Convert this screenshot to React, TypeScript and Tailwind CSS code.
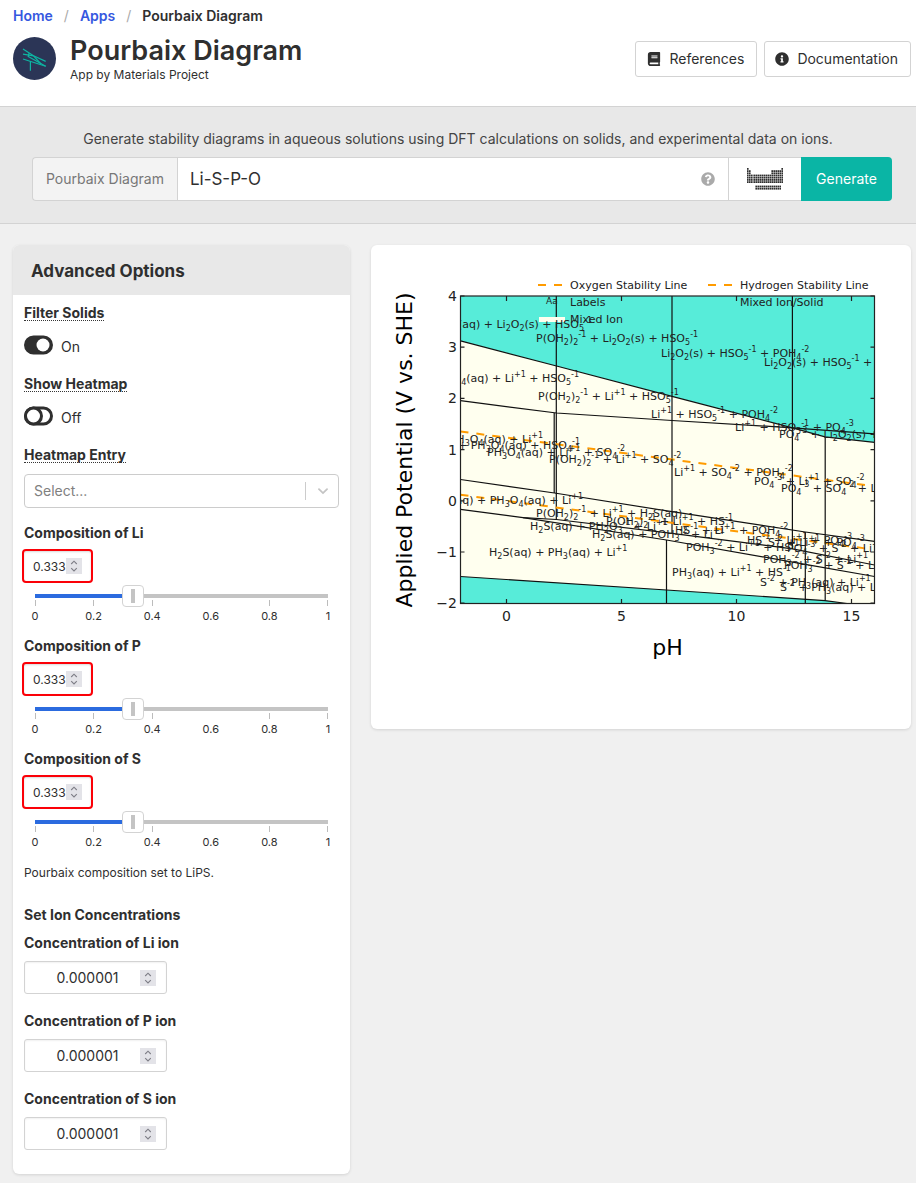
import React, { useState } from "react";
import { FaBook, FaInfoCircle, FaQuestionCircle } from "react-icons/fa";

/* ---------- small icons ---------- */

function LogoMark() {
  return (
    <svg viewBox="0 0 43 43" className="size-[43px] shrink-0" aria-hidden="true">
      <circle cx="21.5" cy="21.5" r="21.5" fill="#2b3556" />
      <g fill="none" stroke="#0eb5a2" strokeWidth="1.2">
        <path d="M10 12 L20.5 18.8 L32.7 24.4" />
        <path d="M10 17.2 L20.5 18.8" />
        <path d="M16.2 16 L15.2 19.5 L32.7 29.2" />
        <path d="M10 22 L32.7 29.2" />
        <path d="M20.5 18.8 L28 27" />
        <path d="M17.4 24 V33.7" />
      </g>
    </svg>
  );
}

function PeriodicTableIcon() {
  const cells: [number, number][] = [];
  for (let row = 0; row < 7; row++) {
    for (let col = 0; col < 18; col++) {
      if (row === 0 && col > 0 && col < 17) continue;
      if ((row === 1 || row === 2) && col > 1 && col < 12) continue;
      cells.push([col * 2 + (col > 2 ? 0.4 : 0), row * 2.2]);
    }
  }
  for (let row = 0; row < 2; row++) {
    for (let col = 4; col < 17; col++) cells.push([col * 2 + 0.4, 17.6 + row * 2.2]);
  }
  return (
    <svg viewBox="0 0 37 22" className="h-[22px] w-[37px]" aria-hidden="true">
      {cells.map(([x, y]) => (
        <rect key={`${x}-${y}`} x={x} y={y} width="1.6" height="1.8" fill="#2f2f2f" />
      ))}
    </svg>
  );
}

function Spinner() {
  return (
    <span className="pointer-events-none absolute top-1/2 right-[11px] flex size-4 -translate-y-1/2 items-center justify-center bg-[#e3e3e8]">
      <svg viewBox="0 0 16 16" className="size-4" fill="none" stroke="#7d7d85" strokeWidth="1.1" aria-hidden="true">
        <path d="M5.2 6 L8 3.2 L10.8 6 M5.2 10.2 L8 13 L10.8 10.2" />
      </svg>
    </span>
  );
}

/* ---------- form parts ---------- */

const numberReset =
  "[appearance:textfield] [&::-webkit-inner-spin-button]:appearance-none [&::-webkit-outer-spin-button]:appearance-none";

function Toggle({ id, label, initial }: { id: string; label: string; initial: boolean }) {
  const [on, setOn] = useState(initial);
  return (
    <div className="mb-[19px]">
      <label htmlFor={id} className="mb-3 block leading-5 font-bold">
        <span className="inline-block h-[18px] border-b border-dotted border-[#363636]">{label}</span>
      </label>
      <label className="flex h-5 cursor-pointer items-center gap-2">
        <input
          id={id}
          type="checkbox"
          className="peer sr-only"
          checked={on}
          onChange={(e) => setOn(e.target.checked)}
        />
        <svg viewBox="0 0 29 20" className="h-5 w-[29px]" aria-hidden="true">
          <rect x="1.5" y="2" width="26" height="16" rx="8" fill={on ? "#2f2f2f" : "#fff"} stroke="#2f2f2f" strokeWidth="3" />
          <circle cx={on ? 19 : 9.5} cy="10" r={on ? 6.5 : 8} fill="#fff" stroke="#2f2f2f" strokeWidth={on ? 0 : 3} />
        </svg>
        <span className="pt-1">{on ? "On" : "Off"}</span>
      </label>
    </div>
  );
}

const marks = ["0", "0.2", "0.4", "0.6", "0.8", "1"];

function Composition({ element }: { element: string }) {
  const [value, setValue] = useState("0.333");
  const id = `composition-${element}`;
  const pct = Number(value) * 100;
  return (
    <div className="h-[113px]">
      <label htmlFor={id} className="block leading-5 font-bold">
        Composition of {element}
      </label>
      <div className="relative mt-[6px] -ml-[2px] w-[71px]">
        <input
          id={id}
          type="number"
          step="0.001"
          value={value}
          onChange={(e) => setValue(e.target.value)}
          className={`h-[34px] w-full rounded border-2 border-[#fb0007] bg-white pl-[9px] text-xs shadow-[inset_0_1px_2px_rgba(0,0,0,0.15)] outline-none ${numberReset}`}
        />
        <Spinner />
      </div>
      <div className="mt-[2px]">
        <input
          type="range"
          aria-label={`Composition of ${element} slider`}
          min="0"
          max="1"
          step="0.001"
          value={value}
          onChange={(e) => setValue(e.target.value)}
          className="block h-[22px] w-full appearance-none bg-[length:calc(100%-22px)_4px] bg-center bg-no-repeat outline-none [&::-webkit-slider-thumb]:size-[22px] [&::-webkit-slider-thumb]:appearance-none [&::-webkit-slider-thumb]:rounded [&::-webkit-slider-thumb]:border [&::-webkit-slider-thumb]:border-[#d3d3d3] [&::-webkit-slider-thumb]:bg-white [&::-webkit-slider-thumb]:bg-[linear-gradient(#c4c4c4,#c4c4c4)] [&::-webkit-slider-thumb]:bg-[length:4px_14px] [&::-webkit-slider-thumb]:bg-center [&::-webkit-slider-thumb]:bg-no-repeat"
          style={{ backgroundImage: `linear-gradient(to right, #2b6bdf ${pct}%, #c4c4c4 ${pct}%)` }}
        />
        <div className="-mt-[7px] flex justify-between px-[11px]">
          {marks.map((m) => (
            <div key={m} className="flex w-0 flex-col items-center text-[11px] leading-4">
              <span className={m === "0.6" ? "h-[6px]" : "h-[6px] w-px bg-[#bcbcbc]"} />
              <span className="mt-[2px]">{m}</span>
            </div>
          ))}
        </div>
      </div>
    </div>
  );
}

function Concentration({ element }: { element: string }) {
  const id = `concentration-${element}`;
  return (
    <div className="mb-[17px]">
      <label htmlFor={id} className="block leading-5 font-bold">
        Concentration of {element} ion
      </label>
      <div className="relative mt-2 w-[143px]">
        <input
          id={id}
          type="number"
          step="0.000001"
          defaultValue="0.000001"
          className={`block h-[33px] w-full rounded-[3px] border border-[#d3d3d3] bg-white pr-[27px] pl-[11px] text-center shadow-[inset_0_1px_2px_rgba(0,0,0,0.06)] outline-none ${numberReset}`}
        />
        <Spinner />
      </div>
    </div>
  );
}

/* ---------- Pourbaix chart ---------- */

/* "_x" sets a subscript and "^-n" or "^+n" a superscript. */
function Formula({ text }: { text: string }) {
  const parts = text.match(/_\d|\^[+-]\d|[^_^]+?(?=_\d|\^[+-]\d|$)/g) ?? [];
  let offset = 0;
  return (
    <>
      {parts.map((part, i) => {
        const target = part[0] === "_" ? 3 : part[0] === "^" ? -5 : 0;
        const dy = target - offset;
        offset = target;
        return (
          <tspan key={i} dy={dy} fontSize={target === 0 ? 11 : 8}>
            {target === 0 ? part : part.slice(1)}
          </tspan>
        );
      })}
    </>
  );
}

type Label = [x: number, y: number, text: string, anchor?: "end"];

const labels: Label[] = [
  [592, 328, "PH_3O_4(aq) + Li_2O_2(s) + HSO_5^-1", "end"],
  [536, 342, "P(OH_2)_2^-1 + Li_2O_2(s) + HSO_5^-1"],
  [661, 357, "Li_2O_2(s) + HSO_5^-1 + POH_4^-2"],
  [764, 366, "Li_2O_2(s) + HSO_5^-1 + PO_4^-3"],
  [579, 382, "PH_3O_4(aq) + Li^+1 + HSO_5^-1", "end"],
  [538, 400, "P(OH_2)_2^-1 + Li^+1 + HSO_5^-1"],
  [651, 418, "Li^+1 + HSO_5^-1 + POH_4^-2"],
  [735, 431, "Li^+1 + HSO_5^-1 + PO_4^-3"],
  [779, 438, "PO_4^-3 + Li_2O_2(s) + SO_4^-2"],
  [543, 443, "HSO_4^-1 + PH_3O_4(aq) + Li^+1", "end"],
  [580, 449, "Li^+1 + PH_3O_4(aq) + HSO_4^-1", "end"],
  [487, 456, "PH_3O_4(aq) + Li^+1 + SO_4^-2"],
  [549, 463, "P(OH_2)_2^-1 + Li^+1 + SO_4^-2"],
  [674, 476, "Li^+1 + SO_4^-2 + POH_4^-2"],
  [754, 485, "PO_4^-3 + Li^+1 + SO_4^-2"],
  [781, 492, "PO_4^-3 + SO_4^-2 + Li^+1"],
  [583, 504, "H_2S(aq) + PH_3O_4(aq) + Li^+1", "end"],
  [536, 517, "P(OH_2)_2^-1 + Li^+1 + H_2S(aq)"],
  [606, 525, "P(OH_2)_2^-1 + Li^+1 + HS^-1"],
  [530, 530, "H_2S(aq) + PH_2O_3^-1 + Li^+1"],
  [592, 538, "H_2S(aq) + POH_3^-2 + Li^+1"],
  [675, 534, "HS^-1 + Li^+1 + POH_4^-2"],
  [747, 544, "HS^-1 + Li^+1 + PO_4^-3"],
  [768, 546, "S^-2 + Li^+1 + PO_4^-3"],
  [686, 551, "POH_3^-2 + Li^+1 + HS^-1"],
  [787, 552, "PO_4^-3 + S^-2 + Li^+1"],
  [489, 556, "H_2S(aq) + PH_3(aq) + Li^+1"],
  [763, 563, "POH_3^-2 + S^-2 + Li^+1"],
  [784, 569, "POH_3^-2 + S^-2 + Li^+1"],
  [672, 576, "PH_3(aq) + Li^+1 + HS^-1"],
  [760, 586, "S^-2 + PH_3(aq) + Li^+1"],
  [780, 591, "S^-2 + PH_3(aq) + Li^+1"],
];

const xTicks = [0, 5, 10, 15];
const yTicks = [4, 3, 2, 1, 0, -1, -2];
const px = (v: number) => 506.5 + v * 23;
const py = (v: number) => 500.8 - v * 51.2;

function PourbaixChart() {
  return (
    <svg
      viewBox="371 245 540 484"
      className="block h-auto w-full"
      role="img"
      aria-label="Pourbaix diagram"
      fontFamily='"DejaVu Sans", sans-serif'
    >
      <defs>
        <clipPath id="plot">
          <rect x="460.5" y="296" width="414" height="307.5" />
        </clipPath>
      </defs>

      <rect x="460.5" y="296" width="414" height="307.5" fill="#ffffef" />
      <path d="M460.5 296 H874.5 V442.3 L825 436.8 L792.5 427.8 L672 396.3 L556.5 366 L460.5 340.8 Z" fill="#57ecd9" />
      <path d="M460.5 576.5 L666.5 590 L825 600.6 L847 603.5 H460.5 Z" fill="#57ecd9" />

      <g fill="none" stroke="#111" strokeWidth="1.2">
        <path d="M460.5 340.8 L556.5 366 L672 396.3 L792.5 427.8 L825 436.8 L874.5 442.3" />
        <path d="M460.5 400.7 L556.5 413 L672 420.5 L792.5 427.8 L874.5 433.8" />
        <path d="M460.5 479.5 L554.5 493 L672 511.7 L805.3 532 L874.5 541.3" />
        <path d="M460.5 509.4 L523 517.7 L556.5 519.5 L672 533.4 L792.5 548.8 L874.5 565" />
        <path d="M523 517.7 L666.5 540 L805.3 564.3 L874.5 576.5" />
        <path d="M460.5 576.5 L666.5 590 L825 600.6 L847 603.5" />
        <path d="M556.3 296 V519 M554.2 413 V493 M672 296 V533 M666.5 540 V603 M792.4 296 V549 M825.2 437 V600.6 M805.3 532 V603" />
      </g>

      <g stroke="#ff9b00" strokeWidth="2" strokeDasharray="8 8">
        <path d="M460.5 431.5 L872 486" />
        <path d="M460.5 494.8 L872 549.3" />
        <path d="M538 285 H568 M708 285 H738" />
      </g>

      <rect x="539" y="317" width="26" height="5" fill="#ffffef" />

      <g fill="#222" fontSize="11" clipPath="url(#plot)">
        {labels.map(([x, y, text, anchor], i) => (
          <text key={i} x={x} y={y} textAnchor={anchor ?? "start"}>
            <Formula text={text} />
          </text>
        ))}
      </g>

      <g fill="#222" fontSize="11">
        <text x="570" y="289">Oxygen Stability Line</text>
        <text x="740" y="289">Hydrogen Stability Line</text>
        <text x="546" y="304" fontSize="9">Aa</text>
        <text x="570" y="306">Labels</text>
        <text x="740" y="306">Mixed Ion/Solid</text>
        <text x="570" y="323">Mixed Ion</text>
      </g>

      <g stroke="#222" strokeWidth="1.2" fill="none">
        <rect x="460.5" y="296" width="414" height="307.5" />
        {xTicks.map((v) => (
          <path key={v} d={`M${px(v)} 603 v-4 M${px(v)} 296 v5`} />
        ))}
        {yTicks.map((v) => (
          <path key={v} d={`M460.5 ${py(v)} h4 M874.5 ${py(v)} h-4`} />
        ))}
      </g>

      <g fill="#222" fontSize="14">
        {xTicks.map((v) => (
          <text key={v} x={px(v)} y="621" textAnchor="middle">
            {v}
          </text>
        ))}
        {yTicks.map((v) => (
          <text key={v} x="457" y={py(v) + 5} textAnchor="end">
            {v < 0 ? `−${-v}` : v}
          </text>
        ))}
      </g>

      <g fill="#000" fontSize="22" textAnchor="middle">
        <text x="667.5" y="655">pH</text>
        <text transform="translate(412 450) rotate(-90)">Applied Potential (V vs. SHE)</text>
      </g>
    </svg>
  );
}

/* ---------- page ---------- */

const cardShadow = "shadow-[0_1px_3px_rgba(0,0,0,0.12)]";

export default function App() {
  return (
    <div className="min-h-screen bg-[#f0f0f0] font-['Inter',sans-serif] text-sm text-[#2f2f2f]">
      <header className="border-b border-[#d3d3d3] bg-white pr-[5px] pb-[23px] pl-[13px]">
        <nav aria-label="Breadcrumb" className="flex h-8 items-center gap-[11px] font-semibold">
          <a href="#home" className="text-[#3558e0]">Home</a>
          <span className="font-normal text-[#aaa]">/</span>
          <a href="#apps" className="text-[#3558e0]">Apps</a>
          <span className="font-normal text-[#aaa]">/</span>
          <span aria-current="page">Pourbaix Diagram</span>
        </nav>
        <div className="flex items-center justify-between">
          <div className="flex items-center gap-[14px] pt-[2px]">
            <LogoMark />
            <div className="h-[49px]">
              <h1 className="text-[27px] leading-[33px] font-semibold">Pourbaix Diagram</h1>
              <p className="text-xs leading-4">App by Materials Project</p>
            </div>
          </div>
          <div className="flex gap-[7px] pt-[2px]">
            <button className="flex h-9 items-center gap-2 rounded-[3px] border border-[#d3d3d3] bg-white pr-3 pl-[11px]">
              <FaBook className="size-[14px]" />
              References
            </button>
            <button className="flex h-9 items-center gap-2 rounded-[3px] border border-[#d3d3d3] bg-white pr-3 pl-[10px]">
              <FaInfoCircle className="size-[14px]" />
              Documentation
            </button>
          </div>
        </div>
      </header>

      <section className="border-b border-[#d3d3d3] bg-[#e8e8e8] px-6 pt-[22px] pb-[22px] sm:pl-8">
        <p className="mb-2 pr-2 text-center leading-5 text-[#444]">
          Generate stability diagrams in aqueous solutions using DFT calculations on solids, and experimental data on ions.
        </p>
        <form className="flex h-11" onSubmit={(e) => e.preventDefault()}>
          <label
            htmlFor="formula"
            className="flex shrink-0 items-center rounded-l border border-r-0 border-[#d3d3d3] bg-[#f3f3f3] px-[13px] text-[#777]"
          >
            Pourbaix Diagram
          </label>
          <div className="relative min-w-0 flex-1">
            <input
              id="formula"
              type="text"
              defaultValue="Li-S-P-O"
              className="h-full w-full border border-[#d3d3d3] bg-white pr-10 pl-3 text-[17px] outline-none"
            />
            <FaQuestionCircle className="absolute top-[15px] right-[14px] size-[14px] text-[#aaa]" />
          </div>
          <button
            type="button"
            aria-label="Show periodic table"
            className="flex w-[72px] items-center justify-center border-y border-[#d3d3d3] bg-white"
          >
            <PeriodicTableIcon />
          </button>
          <button type="submit" className="w-[91px] rounded-r bg-[#0ab5a5] text-white">
            Generate
          </button>
        </form>
      </section>

      <main className="grid grid-cols-[337px_minmax(0,1fr)] items-start gap-[21px] py-[21px] pr-[5px] pb-[9px] pl-[13px]">
        <aside className={`overflow-hidden rounded-md bg-white ${cardShadow}`}>
          <h2 className="bg-[#e8e8e8] px-[18px] pt-3 pb-[10px] text-[17px] leading-7 font-bold">Advanced Options</h2>
          <div className="px-[11px] pt-2 pb-[7px]">
            <Toggle id="filter-solids" label="Filter Solids" initial={true} />
            <Toggle id="show-heatmap" label="Show Heatmap" initial={false} />
            <label htmlFor="heatmap-entry" className="block leading-5 font-bold">
              <span className="inline-block h-[18px] border-b border-dotted border-[#363636]">Heatmap Entry</span>
            </label>
            <div className="relative mt-[9px] mb-[15px]">
              <select
                id="heatmap-entry"
                className="block h-[34px] w-full appearance-none rounded border border-[#ccc] bg-white px-[9px] text-[#808080] outline-none"
              >
                <option>Select...</option>
              </select>
              <span className="pointer-events-none absolute inset-y-2 right-0 flex w-[34px] items-center justify-center border-l border-[#ccc]">
                <svg viewBox="0 0 20 20" className="size-[18px]" fill="none" stroke="#c4c4c4" strokeWidth="2" strokeLinecap="round" aria-hidden="true">
                  <path d="M5.5 8 L10 12.3 L14.5 8" />
                </svg>
              </span>
            </div>
            <Composition element="Li" />
            <Composition element="P" />
            <Composition element="S" />
            <p className="mt-[1px] text-xs leading-5">Pourbaix composition set to LiPS.</p>
            <h3 className="mt-[22px] mb-2 leading-5 font-bold">Set Ion Concentrations</h3>
            <Concentration element="Li" />
            <Concentration element="P" />
            <Concentration element="S" />
          </div>
        </aside>

        <section className={`rounded-md bg-white ${cardShadow}`}>
          <PourbaixChart />
        </section>
      </main>
    </div>
  );
}
